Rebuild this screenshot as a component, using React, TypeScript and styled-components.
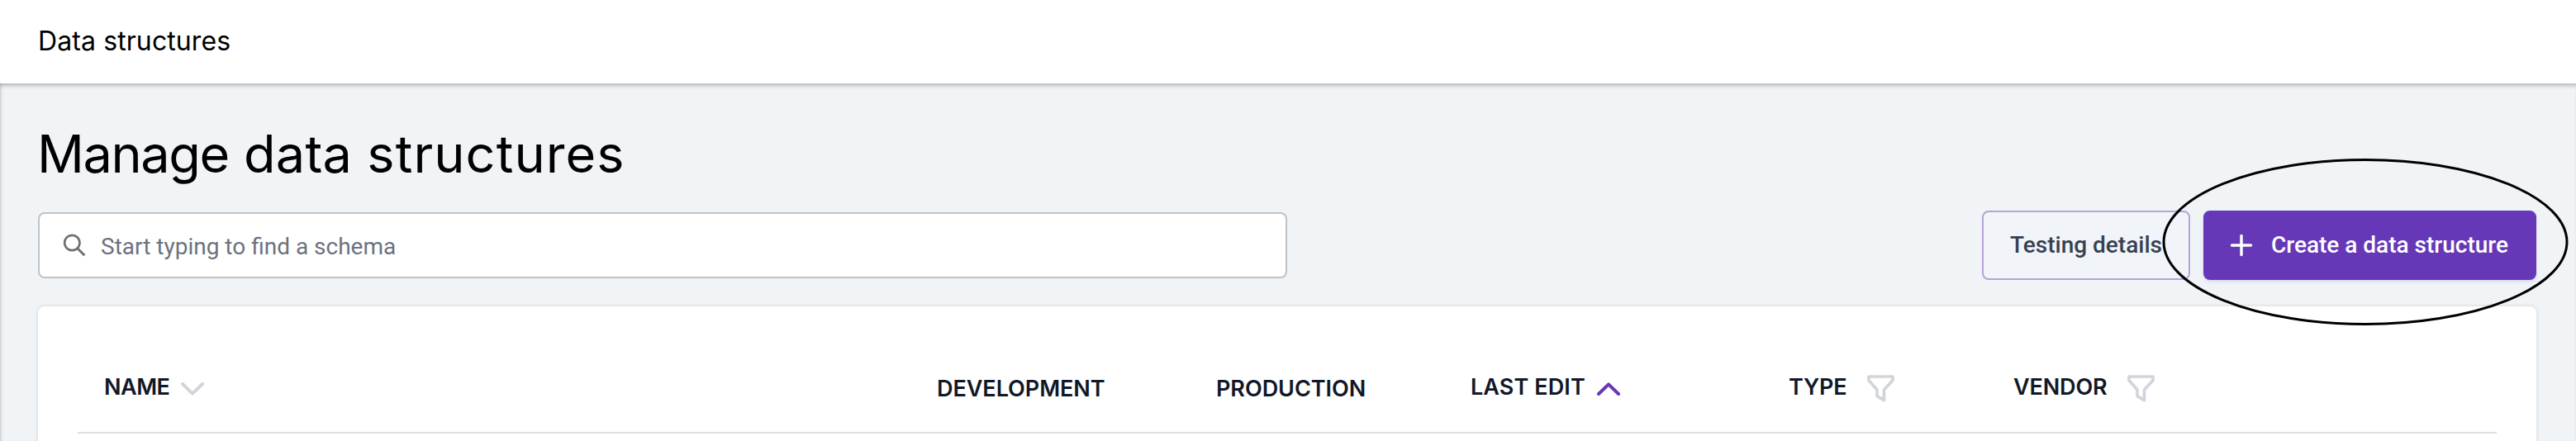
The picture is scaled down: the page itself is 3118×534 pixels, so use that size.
import React from 'react';
import styled, { createGlobalStyle } from 'styled-components';

const GlobalStyle = createGlobalStyle`
  *, *::before, *::after { box-sizing: border-box; }
  body {
    margin: 0;
    overflow: hidden;
    background: #f0f4f7;
    font-family: Roboto, "Liberation Sans", sans-serif;
  }
  svg { display: block; flex: none; }
`;

const Page = styled.div`
  display: flex;
  flex-direction: column;
  height: 534px;
  overflow: hidden;
`;

const TopBar = styled.header`
  display: flex;
  align-items: center;
  flex: none;
  height: 101px;
  padding: 0 46px 2px;
  background: #fff;
`;

const Crumb = styled.span`
  font-family: Inter, Roboto, sans-serif;
  font-size: 32px;
  line-height: 41px;
  letter-spacing: 0.1px;
  color: #000;
`;

const Main = styled.main`
  display: flex;
  flex-direction: column;
  flex: 1;
  min-height: 0;
  padding: 45px 48px 0 46px;
  background: #f0f4f7;
  box-shadow: inset 0 5px 4px -2px rgba(0, 0, 0, 0.22), inset 4px 0 4px -3px rgba(0, 0, 0, 0.16);
`;

const Title = styled.h1`
  flex: none;
  margin: 0 0 29px -1px;
  font-family: Inter, Roboto, sans-serif;
  font-size: 63px;
  font-weight: 400;
  line-height: 80px;
  word-spacing: 0.5px;
  color: #000;
`;

const Word = styled.span<{ $tracking: number }>`
  letter-spacing: ${(p) => p.$tracking}px;
`;

const Toolbar = styled.div`
  display: flex;
  flex: none;
  align-items: center;
  justify-content: space-between;
  height: 84px;
`;

const SearchBox = styled.label`
  display: flex;
  align-items: center;
  gap: 18px;
  width: 1512px;
  height: 80px;
  padding: 0 28px;
  border: 2px solid #c2c2c2;
  border-radius: 8px;
  background: #fff;
`;

const SearchInput = styled.input`
  flex: 1;
  height: 40px;
  padding: 2px 0 0;
  border: 0;
  outline: 0;
  background: transparent;
  font: 400 28px Roboto, "Liberation Sans", sans-serif;
  &::placeholder {
    color: #6b7280;
    opacity: 1;
  }
`;

const Actions = styled.div`
  position: relative;
  display: flex;
  gap: 16px;
`;

const Button = styled.button<{ $primary?: boolean }>`
  display: flex;
  align-items: center;
  gap: 22px;
  height: 84px;
  padding: 0 ${(p) => (p.$primary ? '32px 1px 30px' : '32px 1px')};
  width: ${(p) => (p.$primary ? '403px' : '252px')};
  border: 2px solid ${(p) => (p.$primary ? '#6638b8' : '#b5a3d9')};
  border-radius: 8px;
  background: ${(p) => (p.$primary ? '#6638b8' : '#f1f4f8')};
  color: ${(p) => (p.$primary ? '#fff' : '#374151')};
  box-shadow: ${(p) => (p.$primary ? '0 2px 4px rgba(102, 56, 184, 0.14)' : 'none')};
  font: 500 28px/40px Roboto, "Liberation Sans", sans-serif;
  white-space: nowrap;
`;

const Highlight = styled.svg`
  position: absolute;
  top: -64px;
  left: 218px;
  pointer-events: none;
`;

const Card = styled.section`
  flex: none;
  height: 220px;
  margin-top: 32px;
  padding: 0 48px;
  border-radius: 8px;
  background: #fff;
  box-shadow: 0 0 4px rgba(30, 20, 60, 0.16);
`;

const HeaderRow = styled.div`
  display: grid;
  grid-template-columns: 1008px 338px 308px 385px 272px 1fr;
  align-items: center;
  height: 154px;
  padding-top: 43px;
  border-bottom: 2px solid #dfdfdf;
`;

const HeaderCell = styled.div<{ $lowered?: boolean }>`
  display: flex;
  align-items: center;
  height: 40px;
  padding: ${(p) => (p.$lowered ? '4px' : '0')} 0 0 32px;
`;

const Label = styled.span<{ $width: number; $tracking: number }>`
  width: ${(p) => p.$width}px;
  font-family: Inter, Roboto, sans-serif;
  font-size: 27px;
  font-weight: 600;
  line-height: 36px;
  letter-spacing: ${(p) => p.$tracking}px;
  color: #111827;
  white-space: nowrap;
`;

const IconSlot = styled.span`
  padding-top: 4px;
`;

const SearchIcon = () => (
  <svg width="28" height="28" viewBox="0 0 28 28" fill="none" stroke="#6f6f6f" strokeWidth="2.7">
    <circle cx="11.3" cy="11" r="9.2" />
    <path d="M17.8 17.8L26.3 26.3" strokeWidth="3" />
  </svg>
);

const PlusIcon = () => (
  <svg width="28" height="28" viewBox="0 0 28 28" fill="none" stroke="#fff" strokeWidth="3.4" strokeLinecap="round">
    <path d="M14 2.5V25.5M2.5 14H25.5" />
  </svg>
);

const Chevron = ({ up }: { up?: boolean }) => (
  <svg
    width="28"
    height="16"
    viewBox="0 0 28 16"
    fill="none"
    stroke={up ? '#6638b8' : '#d1d5db'}
    strokeWidth="4"
    strokeLinecap="round"
    strokeLinejoin="round"
  >
    <path d={up ? 'M2 14L14 2.4L26 14' : 'M2 2L14 13.6L26 2'} />
  </svg>
);

const FilterIcon = () => (
  <svg width="33" height="33" viewBox="0 0 33 33" fill="none" stroke="#d1d5db" strokeWidth="3.7" strokeLinejoin="round">
    <path d="M1.9 2H31V6.6L20.4 18V30.6L12 25.6V18L1.9 6.6Z" />
  </svg>
);

type Column = { label: string; width: number; tracking: number; icon?: React.ReactNode };

const columns: Column[] = [
  { label: 'NAME', width: 93, tracking: -0.5, icon: <Chevron /> },
  { label: 'DEVELOPMENT', width: 204, tracking: -0.05 },
  { label: 'PRODUCTION', width: 182, tracking: -0.05 },
  { label: 'LAST EDIT', width: 153, tracking: 0.1, icon: <Chevron up /> },
  { label: 'TYPE', width: 95, tracking: -0.2, icon: <FilterIcon /> },
  { label: 'VENDOR', width: 138, tracking: -0.15, icon: <FilterIcon /> },
];

export default function App() {
  return (
    <Page>
      <GlobalStyle />
      <TopBar>
        <Crumb>Data structures</Crumb>
      </TopBar>
      <Main>
        <Title>
          <Word $tracking={-1.4}>Manage</Word> <Word $tracking={0.2}>data</Word>{' '}
          <Word $tracking={1.1}>structures</Word>
        </Title>
        <Toolbar>
          <SearchBox>
            <SearchIcon />
            <SearchInput placeholder="Start typing to find a schema" />
          </SearchBox>
          <Actions>
            <Button>Testing details</Button>
            <Button $primary>
              <PlusIcon />
              Create a data structure
            </Button>
            <Highlight width="492" height="204" viewBox="0 0 492 204" fill="none">
              <ellipse cx="246" cy="102" rx="244" ry="99.5" stroke="#000" strokeWidth="3" />
            </Highlight>
          </Actions>
        </Toolbar>
        <Card>
          <HeaderRow>
            {columns.map((c) => (
              <HeaderCell key={c.label} $lowered={!c.icon}>
                <Label $width={c.width} $tracking={c.tracking}>
                  {c.label}
                </Label>
                {c.icon && <IconSlot>{c.icon}</IconSlot>}
              </HeaderCell>
            ))}
          </HeaderRow>
        </Card>
      </Main>
    </Page>
  );
}
